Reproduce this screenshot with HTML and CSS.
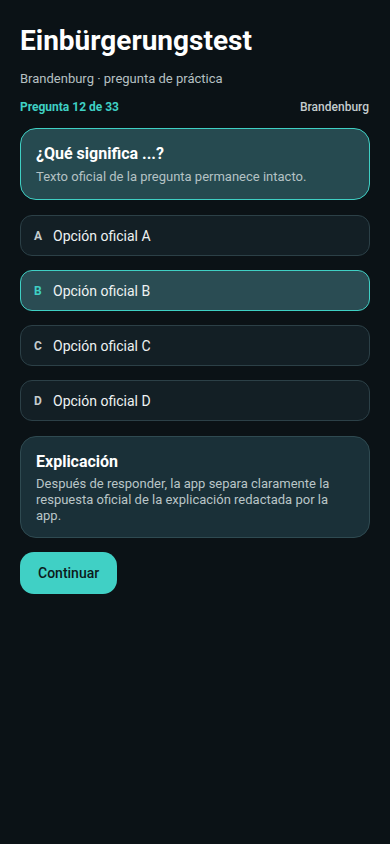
FILE: index.html
```html
<!DOCTYPE html>
<html>
<head>
    <title>Einbürgerungstest</title>
    <link rel="stylesheet" href="styles.css">
</head>
<body>
    <div class="screen">
        <h1 class="title">Einbürgerungstest</h1>
        <p class="subtitle">Brandenburg · pregunta de práctica</p>
        <div class="meta">
            <span class="progress">Pregunta 12 de 33</span>
            <span class="state">Brandenburg</span>
        </div>

        <div class="question">
            <h2>¿Qué significa ...?</h2>
            <p>Texto oficial de la pregunta permanece intacto.</p>
        </div>

        <div class="options">
            <div class="option"><span class="letter">A</span>Opción oficial A</div>
            <div class="option selected"><span class="letter">B</span>Opción oficial B</div>
            <div class="option"><span class="letter">C</span>Opción oficial C</div>
            <div class="option"><span class="letter">D</span>Opción oficial D</div>
        </div>

        <div class="explain">
            <h2>Explicación</h2>
            <p>Después de responder, la app separa claramente la respuesta oficial de la explicación redactada por la app.</p>
        </div>

        <button class="btn">Continuar</button>
    </div>
</body>
</html>
```

FILE: styles.css
```css
html, body {
    margin: 0;
    background: #0b1216;
}
body {
    font-family: Roboto, "Noto Sans", sans-serif;
    color: #f2f5f5;
}
.screen {
    padding: 24px 20px;
    display: flex;
    flex-direction: column;
}
.title {
    font-size: 28px;
    font-weight: 700;
    line-height: 34px;
    margin: 0;
    color: #ffffff;
}
.subtitle {
    font-size: 13px;
    color: #b6c0c2;
    margin: 12px 0 0;
    line-height: 18px;
}
.meta {
    display: flex;
    justify-content: space-between;
    margin-top: 11px;
    padding-right: 1px;
    font-size: 12px;
    line-height: 16px;
}
.progress {
    color: #3fd0c4;
    font-weight: 700;
}
.state {
    color: #c4cccd;
    font-weight: 500;
}
.question {
    margin-top: 13px;
    background: #264a50;
    border: 1px solid #3fd0c4;
    border-radius: 16px;
    padding: 15px 15px 13px;
}
.question h2, .explain h2 {
    font-size: 16px;
    font-weight: 700;
    line-height: 20px;
    margin: 0;
    color: #ffffff;
}
.question p {
    margin: 4px 0 0;
    font-size: 13px;
    line-height: 18px;
    color: #b4c2c4;
}
.options {
    display: flex;
    flex-direction: column;
    gap: 14px;
    margin-top: 15px;
}
.option {
    display: flex;
    align-items: center;
    height: 39px;
    padding: 0 13px;
    background: #131f25;
    border: 1px solid #2c4047;
    border-radius: 12px;
    font-size: 14px;
    color: #eef2f2;
}
.option .letter {
    width: 19px;
    font-size: 12px;
    font-weight: 700;
    color: #c4cccd;
}
.option.selected {
    background: #2a4c53;
    border-color: #3fd0c4;
}
.option.selected .letter {
    color: #3fd0c4;
}
.explain {
    margin-top: 15px;
    background: #1a3038;
    border: 1px solid #2f4a51;
    border-radius: 16px;
    padding: 15px 15px 13px;
}
.explain p {
    margin: 4px 0 0;
    font-size: 13px;
    line-height: 16px;
    color: #b9c5c7;
}
.btn {
    align-self: flex-start;
    margin-top: 14px;
    height: 42px;
    padding: 0 18px;
    border: none;
    border-radius: 14px;
    background: #40d0c5;
    color: #0c1a1c;
    font-family: Roboto, "Noto Sans", sans-serif;
    font-size: 14px;
    font-weight: 500;
}
```
